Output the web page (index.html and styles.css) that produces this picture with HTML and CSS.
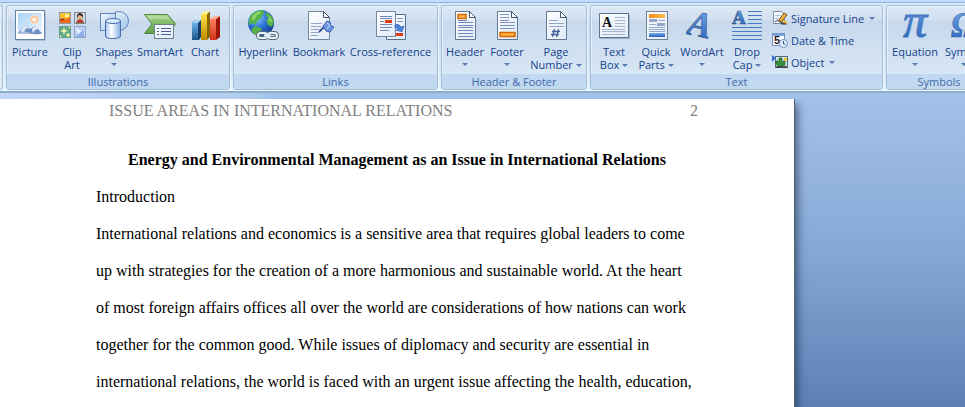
FILE: index.html
```html
<!DOCTYPE html>
<html lang="en">
<head>
	<meta charset="utf-8">
	<title>Document editor</title>
	<link rel="stylesheet" href="styles.css">
</head>
<body>
<svg width="0" height="0" class="defs" aria-hidden="true">
	<defs>
		<linearGradient id="paper" x1="0" y1="0" x2="1" y2="1">
			<stop offset="0" stop-color="#fff"/><stop offset="1" stop-color="#dfe9f6"/>
		</linearGradient>
		<linearGradient id="sky" x1="0" y1="0" x2="1" y2="1">
			<stop offset="0" stop-color="#a9d3f8"/><stop offset="1" stop-color="#f0f8ff"/>
		</linearGradient>
		<linearGradient id="glass" x1="0" y1="0" x2="1" y2="1">
			<stop offset="0" stop-color="#f4f9ff"/><stop offset="1" stop-color="#9cc0ea"/>
		</linearGradient>
		<linearGradient id="tube">
			<stop offset="0" stop-color="#a3c4ee"/><stop offset=".4" stop-color="#fff"/><stop offset="1" stop-color="#83aee3"/>
		</linearGradient>
		<linearGradient id="green" x1="0" y1="0" x2="0" y2="1">
			<stop offset="0" stop-color="#a5d28a"/><stop offset="1" stop-color="#5ca044"/>
		</linearGradient>
		<linearGradient id="blueBar" x1="0" y1="0" x2="0" y2="1">
			<stop offset="0" stop-color="#67b0e8"/><stop offset="1" stop-color="#1f5487"/>
		</linearGradient>
		<linearGradient id="goldBar" x1="0" y1="0" x2="0" y2="1">
			<stop offset="0" stop-color="#ffe34a"/><stop offset="1" stop-color="#b98a00"/>
		</linearGradient>
		<linearGradient id="redBar" x1="0" y1="0" x2="0" y2="1">
			<stop offset="0" stop-color="#f98263"/><stop offset="1" stop-color="#cf3015"/>
		</linearGradient>
		<radialGradient id="globe" cx=".35" cy=".3" r=".75">
			<stop offset="0" stop-color="#8cc6ff"/><stop offset=".5" stop-color="#2c72d8"/><stop offset="1" stop-color="#123a8c"/>
		</radialGradient>
		<linearGradient id="orange">
			<stop offset="0" stop-color="#f68a1e"/><stop offset="1" stop-color="#ffc04d"/>
		</linearGradient>
		<linearGradient id="ink" x1="0" y1="0" x2="0" y2="1">
			<stop offset="0" stop-color="#79aef0"/><stop offset="1" stop-color="#255fb8"/>
		</linearGradient>
	</defs>
</svg>

<header class="ribbon">
	<div class="group group-prev"></div>

	<section class="group" aria-label="Illustrations">
		<div class="tools loose">
			<button type="button" class="tool w42">
				<svg class="icon" viewBox="0 0 32 32">
					<path d="M3 31.500h29M31.500 3v29" stroke="#8da3bf" opacity=".5"/>
					<rect x="1.500" y="1.500" width="29" height="29" fill="#fff" stroke="#5f83a3"/>
					<rect x="4" y="4" width="24" height="21" fill="url(#sky)"/>
					<circle cx="20.500" cy="10.500" r="4.500" fill="#fde3c6"/>
					<circle cx="20.500" cy="10.500" r="3" fill="#fff6dc" stroke="#f2a673"/>
					<path d="M4 24l8-8 4 4 5-3 7 7v1H4z" fill="#6f8fc4"/>
					<path d="M8 20l4-4 3 4-3-1-2 4-4 2zM18 20l3-3 3 3-3 1-2 3z" fill="#e7effb"/>
					<path d="M4 24q6-3 12 0t12 0v1H4z" fill="#a9bde0"/>
				</svg>
				<span>Picture</span>
			</button>
			<button type="button" class="tool w42">
				<svg class="icon" viewBox="0 0 32 32">
					<rect x="3.500" y="3.500" width="11" height="11" fill="#f7c22e" stroke="#8f9aa8"/>
					<path d="M4 14v-4l4 1 6-3v6z" fill="#ed6a18"/><circle cx="11" cy="6.500" r="2" fill="#fff19a"/><path d="M4 10l5-1-1 2-4 1z" fill="#a83512"/>
					<rect x="18.500" y="3.500" width="11" height="11" fill="#ccdcec" stroke="#7f8794"/>
					<path d="M20 14q1-4 4-4t4 4z" fill="#b6402c"/><circle cx="24" cy="8" r="2.500" fill="#e6b58c"/><path d="M21 10V6q3-4 6 0v4l-1-3-3-1-1 1z" fill="#33231c"/>
					<rect x="3.500" y="17.500" width="11" height="11" fill="#5fa98c" stroke="#6d9c8c"/>
					<path d="M8 18l1 3 3 1-3 1-1 3-1-3-3-1 3-1zM12 24l1 1 1 1-1 1-1 1-1-1-1-1 1-1zM4 26l2 2H4zM12 18h2v2z" fill="#fff6a6"/>
					<rect x="18.500" y="17.500" width="11" height="11" fill="#bcd0f5" stroke="#8ea6cf"/>
					<path d="M19 18l10 6v4l-6-1z" fill="#e9f1ff"/><path d="M19 28l8-7 2 7z" fill="#8eaeea"/>
				</svg>
				<span>Clip<br>Art</span>
			</button>
			<button type="button" class="tool w42">
				<svg class="icon" viewBox="0 0 32 32">
					<circle cx="21" cy="12" r="9.500" fill="url(#glass)" stroke="#5c83b8"/>
					<rect x="2.500" y="4.500" width="15" height="17" fill="url(#glass)" stroke="#5c83b8"/>
					<path d="M7.500 12v15q0 2.500 7.500 2.500t7.500-2.500V12z" fill="url(#tube)" stroke="#446fa8"/>
					<ellipse cx="15" cy="12" rx="7.500" ry="2.500" fill="#d9e9fc" stroke="#446fa8"/>
				</svg>
				<span>Shapes</span>
				<i class="arrow"></i>
			</button>
			<button type="button" class="tool w50">
				<svg class="icon" viewBox="0 0 32 32">
					<path d="M.5 5.500h23l8 9.500-8 9.500H.5L8 15z" fill="url(#green)" stroke="#4f8840"/>
					<path d="M2 6.500h21l3 3.500H5z" fill="#c6e5b4" opacity=".6"/>
					<rect x="10.500" y="15.500" width="19" height="14" fill="url(#paper)" stroke="#6e8190"/>
					<path d="M13 19.500h2M17 19.500h10M13 22.500h2M17 22.500h10M13 25.500h2M17 25.500h10" stroke="#4a5f9a"/>
				</svg>
				<span>SmartArt</span>
			</button>
			<button type="button" class="tool w40">
				<svg class="icon" viewBox="0 0 32 32">
					<path d="M3 14l3-3h6v17l-2 3H3z" fill="#173e68"/><path d="M3 14h6v17H3z" fill="url(#blueBar)"/><path d="M3 14l3-3h6l-3 3z" fill="#a1d2f5"/>
					<path d="M18 5l3-3v26l-3 3z" fill="#8a6700"/><path d="M12 5h6v26h-6z" fill="url(#goldBar)"/><path d="M12 5l4-3h5l-3 3z" fill="#fff29b"/>
					<path d="M27 10l4-3v21l-4 3z" fill="#9b1407"/><path d="M21 10h6v21h-6z" fill="url(#redBar)"/><path d="M21 10l4-3h6l-4 3z" fill="#ffb29a"/>
				</svg>
				<span>Chart</span>
			</button>
		</div>
		<h2 class="caption">Illustrations</h2>
	</section>

	<section class="group" aria-label="Links">
		<div class="tools loose">
			<button type="button" class="tool w54">
				<svg class="icon" viewBox="0 0 32 32">
					<circle cx="14" cy="14" r="13" fill="url(#globe)"/>
					<path d="M4 6q5-5 11-5l3 3-3 2-1 4-4 2-1 4-4-2-3 2q-1-6 2-10zM19 3q6 3 8 9l-2 6-4-2-2-5 3-2-3-2zM8 17l6 2 1 4-4 4q-5-2-7-6z" fill="#55b446"/>
					<path d="M6 6q3-3 7-4l1 2-4 2-2 4-4 1zM21 6l4 5-1 3-2-3z" fill="#a4e07d" opacity=".7"/>
					<g fill="none" stroke="#526a7c" stroke-width="4"><rect x="11" y="24" width="9" height="5" rx="2.500"/><rect x="21" y="24" width="9" height="5" rx="2.500"/></g>
					<g fill="none" stroke="#e9f1f6" stroke-width="2"><rect x="11" y="24" width="9" height="5" rx="2.500"/><rect x="21" y="24" width="9" height="5" rx="2.500"/><path d="M17 26.500h7"/></g>
				</svg>
				<span>Hyperlink</span>
			</button>
			<button type="button" class="tool w58">
				<svg class="icon" viewBox="0 0 32 32">
					<path d="M5.500 2.500h15l6 6v22h-21z" fill="url(#paper)" stroke="#71889f"/>
					<path d="M20.500 2.500v6h6z" fill="#fff" stroke="#46566a"/>
					<path d="M8 14.500h11M8 17.500h10M8 20.500h8M8 23.500h8M8 26.500h7" stroke="#92a5c8"/>
					<path d="M16 23l6-6" stroke="#345596" stroke-width="2"/>
					<path d="M20 17l4-5 3 1 1 4 3 1-4 5-4-1-2-3z" fill="#7196df" stroke="#3d62b0"/>
					<path d="M24 14l3 2-3 4" stroke="#c8dafa" fill="none"/>
				</svg>
				<span>Bookmark</span>
			</button>
			<button type="button" class="tool w85">
				<svg class="icon" viewBox="0 0 32 32">
					<path d="M11.500 5.500h19v25h-19z" fill="url(#paper)" stroke="#526f91"/>
					<path d="M22 9.500h6M22 12.500h6M22 20.500h6" stroke="#8497ba"/><path d="M20 24h8v3h-8z" fill="#dc3b16"/>
					<path d="M1.500 2.500h19v25h-19z" fill="url(#paper)" stroke="#71889f"/>
					<path d="M5 7.500h12M5 9.500h12M5 12.500h4M5 15.500h12M5 18.500h12M5 21.500h9" stroke="#7188b4"/><path d="M10 11h7v3h-7z" fill="#dc3b16"/>
					<path d="M20 16q4-2 6 2l3-1-2 6-6-2 2-1q-1-2-3-1z" fill="#4c80dd" stroke="#3058aa" stroke-width=".6"/>
				</svg>
				<span>Cross-reference</span>
			</button>
		</div>
		<h2 class="caption">Links</h2>
	</section>

	<section class="group" aria-label="Header &amp; Footer">
		<div class="tools">
			<button type="button" class="tool w42">
				<svg class="icon" viewBox="0 0 32 32">
					<path d="M6.500 2.500h14l6 6v22h-20z" fill="url(#paper)" stroke="#5f7893"/>
					<path d="M20.500 2.500v6h6z" fill="#fff" stroke="#46566a"/>
					<rect x="9" y="5.500" width="8" height="4" fill="#ffb34c" stroke="#d66a00" stroke-width="1.500"/>
					<path d="M9 11.500h9M9 13.500h15M9 16.500h15M9 18.500h15M9 21.500h15M9 24.500h15M9 27.500h15" stroke="#7389bd"/>
				</svg>
				<span>Header</span>
				<i class="arrow"></i>
			</button>
			<button type="button" class="tool w42">
				<svg class="icon" viewBox="0 0 32 32">
					<path d="M6.500 2.500h14l6 6v22h-20z" fill="url(#paper)" stroke="#5f7893"/>
					<path d="M20.500 2.500v6h6z" fill="#fff" stroke="#46566a"/>
					<path d="M9 5.500h9M9 8.500h9M9 11.500h9M9 13.500h15M9 16.500h15M9 19.500h15" stroke="#7f93c2"/>
					<rect x="9" y="23.500" width="15" height="4" fill="#ffb34c" stroke="#d66a00" stroke-width="1.500"/>
				</svg>
				<span>Footer</span>
				<i class="arrow"></i>
			</button>
			<button type="button" class="tool w56">
				<svg class="icon" viewBox="0 0 32 32">
					<path d="M6.500 2.500h14l6 6v22h-20z" fill="url(#paper)" stroke="#5f7893"/>
					<path d="M20.500 2.500v6h6z" fill="#fff" stroke="#46566a"/>
					<path d="M9 11.500h9M9 14.500h15M9 17.500h15" stroke="#8fa2c8"/>
					<path d="M14.500 20l-2 8M18.500 20l-2 8M12 22.500h8M11 25.500h8" stroke="#44659f" stroke-width="1.300"/>
				</svg>
				<span>Page<br>Number <i class="arrow"></i></span>
			</button>
		</div>
		<h2 class="caption">Header &amp; Footer</h2>
	</section>

	<section class="group" aria-label="Text">
		<div class="tools">
			<button type="button" class="tool w42">
				<svg class="icon" viewBox="0 0 32 32">
					<path d="M2 29.500h30M31.500 6v24" stroke="#8093ab" opacity=".6"/>
					<rect x="1.500" y="4.500" width="29" height="24" fill="url(#paper)" stroke="#5c7592"/>
					<text x="4" y="18" class="glyph" font-size="14" font-weight="bold" fill="#111">A</text>
					<path d="M17 8.500h10M17 11.500h10M17 14.500h10M17 17.500h10M4 20.500h23M4 22.500h23M4 25.500h23" stroke="#a7b4c9"/>
				</svg>
				<span>Text<br>Box <i class="arrow"></i></span>
			</button>
			<button type="button" class="tool w42">
				<svg class="icon" viewBox="0 0 32 32">
					<rect x="6.500" y="2.500" width="21" height="28" fill="url(#paper)" stroke="#6d8296"/>
					<rect x="9" y="5" width="16" height="4" fill="url(#orange)"/>
					<path d="M9 10h8v3H9zM17 14h8v3h-8z" fill="#91a6ca"/>
					<path d="M18 11.500h7M9 15.500h7M9 18.500h16M9 20.500h16M9 22.500h16" stroke="#93a7cd"/>
					<rect x="9" y="24" width="16" height="4" fill="url(#ink)"/>
				</svg>
				<span>Quick<br>Parts <i class="arrow"></i></span>
			</button>
			<button type="button" class="tool w50">
				<svg class="icon" viewBox="0 0 32 32">
					<text x="2" y="28" transform="rotate(12 16 16)" class="glyph" font-size="36" font-weight="bold" font-style="italic" fill="url(#ink)" stroke="#355987" stroke-width=".6">A</text>
				</svg>
				<span>WordArt</span>
				<i class="arrow"></i>
			</button>
			<button type="button" class="tool w40">
				<svg class="icon" viewBox="0 0 32 32">
					<text x="1" y="15" class="glyph" font-size="19" font-weight="bold" fill="url(#ink)" stroke="#31588f" stroke-width=".7">A</text>
					<path d="M17 2.500h14M17 6.500h14M17 10.500h14M17 14.500h14M1 18.500h30M1 22.500h30M1 26.500h30M1 30.500h30" stroke="#457bc4"/>
				</svg>
				<span>Drop<br>Cap <i class="arrow"></i></span>
			</button>
			<div class="stack">
				<button type="button" class="row">
					<svg class="icon-small" viewBox="0 0 16 16">
						<path d="M1.500 1.500h8l3 3v9h-11z" fill="url(#paper)" stroke="#798da5"/>
						<path d="M3 5.500h5M3 8.500h4" stroke="#a9bbd6"/>
						<path d="M3 12q3-3 4-1t4 1" fill="none" stroke="#33445e"/>
						<path d="M7 10l5-7 3 2-5 6-3 1z" fill="#f0b936" stroke="#705119"/><path d="M9 13.500h6" stroke="#3e443e" stroke-width="2"/><path d="M11 11l4 2" stroke="#f0b936" stroke-width="2"/>
					</svg>
					<span>Signature Line</span>
					<i class="arrow"></i>
				</button>
				<button type="button" class="row">
					<svg class="icon-small" viewBox="0 0 16 16">
						<rect x=".5" y="1.500" width="12" height="12" fill="#fff" stroke="#7390bf"/><path d="M1 2h11v2H1z" fill="#7da3e0"/>
						<text x="2" y="12" class="num" font-size="11" font-weight="bold" fill="#222">5</text>
						<circle cx="11.500" cy="11.500" r="4" fill="#e7f1fc" stroke="#6f8fc0"/><path d="M11.500 9v3h2" fill="none" stroke="#334f79"/>
					</svg>
					<span>Date &amp; Time</span>
				</button>
				<button type="button" class="row">
					<svg class="icon-small" viewBox="0 0 16 16">
						<rect x="3.500" y="2.500" width="12" height="11" fill="#d5e6f0" stroke="#566a74"/>
						<path d="M0 1l4 3-4 4z" fill="#366dcc"/><path d="M4 7h2v2h1V4h3v6h1V7h2v4l-2 1H6l-2-2z" fill="#2f9a36" stroke="#174d22" stroke-width=".6"/>
						<path d="M12 4h3v3h-3z" fill="#f0c63d"/><path d="M4 13h11" stroke="#333" stroke-width="1.500"/>
					</svg>
					<span>Object</span>
					<i class="arrow"></i>
				</button>
			</div>
		</div>
		<h2 class="caption">Text</h2>
	</section>

	<section class="group" aria-label="Symbols">
		<div class="tools loose">
			<button type="button" class="tool w52">
				<svg class="icon" viewBox="0 0 32 32">
					<text x="16" y="28" class="glyph" font-size="48" font-style="italic" text-anchor="middle" fill="url(#ink)" stroke="#3f74bd" stroke-width="1">π</text>
				</svg>
				<span>Equation</span>
				<i class="arrow"></i>
			</button>
			<button type="button" class="tool w46">
				<svg class="icon" viewBox="0 0 32 32">
					<text x="16" y="28" class="glyph" font-size="35" font-weight="bold" font-style="italic" text-anchor="middle" fill="url(#ink)" stroke="#3566a8" stroke-width=".6">Ω</text>
				</svg>
				<span>Symbol</span>
				<i class="arrow"></i>
			</button>
		</div>
		<h2 class="caption">Symbols</h2>
	</section>
</header>

<main class="workspace">
	<article class="page">
		<div class="running-head">
			<span>ISSUE AREAS IN INTERNATIONAL RELATIONS</span>
			<span>2</span>
		</div>
		<h1>Energy and Environmental Management as an Issue in International Relations</h1>
		<p>Introduction</p>
		<p>International relations and economics is a sensitive area that requires global leaders to come<br>
			up with strategies for the creation of a more harmonious and sustainable world. At the heart<br>
			of most foreign affairs offices all over the world are considerations of how nations can work<br>
			together for the common good. While issues of diplomacy and security are essential in<br>
			international relations, the world is faced with an urgent issue affecting the health, education,</p>
	</article>
</main>
</body>
</html>
```

FILE: styles.css
```css
* {
	box-sizing: border-box;
}

body {
	margin: 0;
	height: 100vh;
	display: flex;
	flex-direction: column;
	overflow: hidden;
	font-family: "Open Sans", "Noto Sans", sans-serif;
}

.defs {
	position: absolute;
}

/* ribbon */
.ribbon {
	display: flex;
	flex: none;
	gap: 3px;
	padding: 3px 0 1px;
	border-top: 2px solid #bfdbff;
	border-bottom: 2px solid #8caccb;
	background: linear-gradient(#8db2e3 1px, #dbe7f5 1px, #d0dff1 20%, #cbdbef 22%, #dcebf9 90%, #e6fbff);
}

.group {
	flex: none;
	display: flex;
	flex-direction: column;
	border: 1px solid #a2bedb;
	border-radius: 3px;
	background: linear-gradient(#dee8f5, #d1dff0 14px, #c7d8ed 15px, #d8e7f5 68px);
	box-shadow: 1px 1px #edf5fd, inset 1px 1px #e8f1fa;
	overflow: hidden;
}

.group-prev {
	width: 3px;
	border-left: 0;
	border-radius: 0 3px 3px 0;
}

.tools {
	display: flex;
	height: 68px;
	padding: 0 2px;
}

.loose {
	padding-right: 4px;
}

button {
	border: 0;
	padding: 0;
	background: none;
	color: #15428b;
	font: 11px/13px "Open Sans", "Noto Sans", sans-serif;
	white-space: nowrap;
}

.tool {
	display: flex;
	flex-direction: column;
	align-items: center;
	flex: none;
	padding-top: 3px;
}

.icon {
	width: 32px;
	height: 32px;
	margin-bottom: 4px;
}

.w40 { width: 40px; }
.w42 { width: 42px; }
.w46 { width: 46px; }
.w50 { width: 50px; }
.w52 { width: 52px; }
.w54 { width: 54px; }
.w56 { width: 56px; }
.w58 { width: 58px; }
.w85 { width: 85px; }

.glyph {
	font-family: "Liberation Serif", serif;
}

.num {
	font-family: "Liberation Sans", sans-serif;
}

.arrow {
	display: inline-block;
	border: 3px solid transparent;
	border-top-color: #567db1;
	border-bottom: 0;
	vertical-align: 2px;
}

.tool > .arrow {
	margin-top: 5px;
}

.stack {
	display: flex;
	flex-direction: column;
	padding: 1px 0 0 5px;
	width: 113px;
}

.row {
	display: flex;
	align-items: center;
	gap: 3px;
	height: 22px;
}

.row .arrow {
	margin-left: 2px;
}

.icon-small {
	flex: none;
	width: 16px;
	height: 16px;
}

.caption {
	margin: 0;
	height: 15px;
	background: #c1d8f0;
	color: #3e6aaa;
	font-size: 11px;
	font-weight: normal;
	line-height: 15px;
	text-align: center;
}

/* document area */
.workspace {
	flex: 1;
	display: flex;
	padding-top: 6px;
	background:
		linear-gradient(100deg, #bfd5f3, #b5cef0 230px, rgba(163, 194, 234, 0) 270px) no-repeat 0 0 / 280px 6px,
		linear-gradient(#a3c2ea, #98b8e2 20%, #86a8d6 50%, #5c80b4);
}

.page {
	width: 795px;
	padding: 0 96px;
	border-right: 1px solid #56606c;
	background: #fff;
	box-shadow: 1px 6px 9px 1px rgba(20, 40, 70, 0.7);
	clip-path: inset(0 -14px 0 0);
	color: #000;
	font: 16px/37px "Liberation Serif", serif;
	white-space: nowrap;
}

.running-head {
	display: flex;
	justify-content: space-between;
	padding-left: 13px;
	margin-bottom: 18px;
	color: #808080;
	line-height: 24px;
}

.page h1 {
	margin: 0;
	font-size: 16px;
	text-align: center;
}

.page p {
	margin: 0;
}
```
